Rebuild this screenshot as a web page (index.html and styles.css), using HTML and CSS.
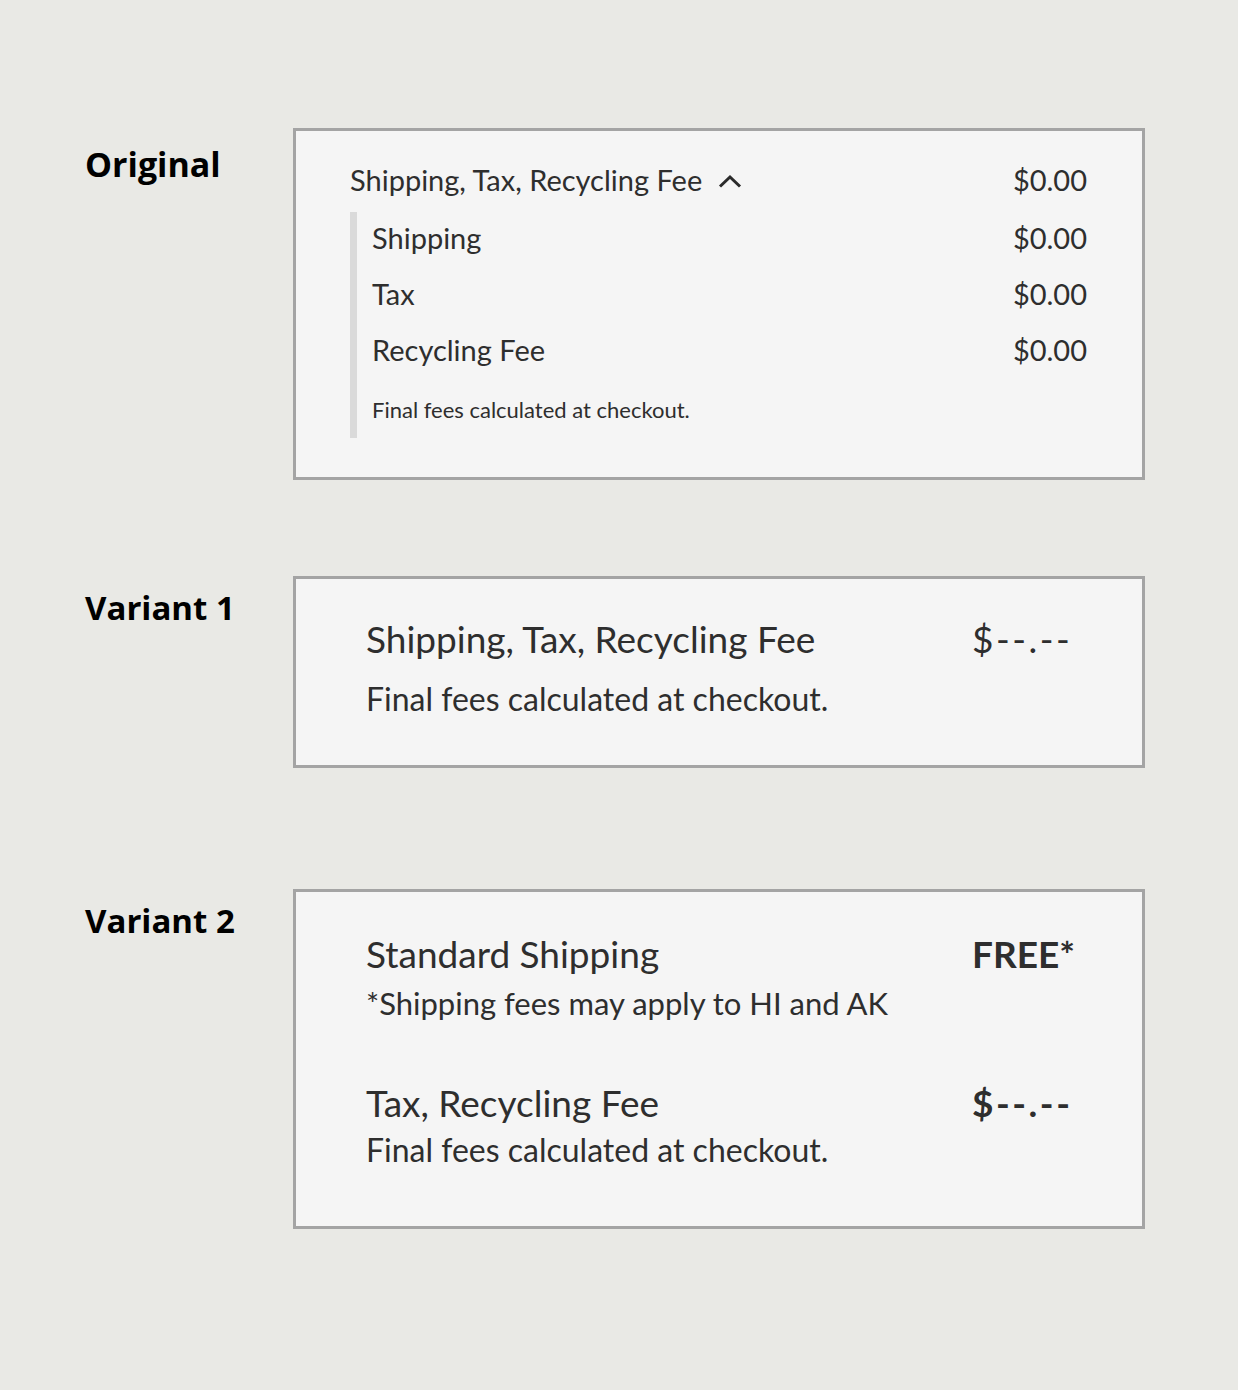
FILE: index.html
```html
<!DOCTYPE html>
<html lang="en">
<head>
  <meta charset="UTF-8" />
  <title>Fee Summary Variants</title>
  <link rel="stylesheet" href="styles.css">
</head>
<body>
  <div class="page">

    <!-- Original -->
    <div class="section section-original">
      <h2 class="label label-original">Original</h2>
      <div class="card card-original">
        <div class="row header-row">
          <span class="header-title">Shipping, Tax, Recycling Fee
            <svg class="chevron" width="24" height="14" viewBox="0 0 24 14">
              <polyline points="2,12.5 12,3 22,12.5" fill="none" stroke="#2b2b2b" stroke-width="3" />
            </svg>
          </span>
          <span class="amount">$0.00</span>
        </div>
        <div class="breakdown">
          <div class="row sub-row"><span>Shipping</span><span class="amount">$0.00</span></div>
          <div class="row sub-row"><span>Tax</span><span class="amount">$0.00</span></div>
          <div class="row sub-row"><span>Recycling Fee</span><span class="amount">$0.00</span></div>
          <p class="fine-print">Final fees calculated at checkout.</p>
        </div>
      </div>
    </div>

    <!-- Variant 1 -->
    <div class="section section-v1">
      <h2 class="label">Variant 1</h2>
      <div class="card card-v1">
        <div class="line">
          <span class="big-title">Shipping, Tax, Recycling Fee</span>
          <span class="value dashes">$--.--</span>
        </div>
        <p class="note note-spaced">Final fees calculated at checkout.</p>
      </div>
    </div>

    <!-- Variant 2 -->
    <div class="section section-v2">
      <h2 class="label">Variant 2</h2>
      <div class="card card-v2">
        <div class="group">
          <div class="line">
            <span class="big-title">Standard Shipping</span>
            <span class="value bold">FREE*</span>
          </div>
          <p class="note">*Shipping fees may apply to HI and AK</p>
        </div>
        <div class="group group-second">
          <div class="line">
            <span class="big-title">Tax, Recycling Fee</span>
            <span class="value bold dashes">$--.--</span>
          </div>
          <p class="note">Final fees calculated at checkout.</p>
        </div>
      </div>
    </div>

  </div>
</body>
</html>
```

FILE: styles.css
```css
body {
  margin: 0;
  background-color: #e9e9e5;
  font-family: 'Lato', 'Open Sans', sans-serif;
  color: #2e2e2e;
}

.page {
  padding: 128px 0 0 85px;
}

.section {
  display: grid;
  grid-template-columns: 208px 852px;
  align-items: start;
}

.section-original {
  margin-bottom: 96px;
}

.section-v1 {
  margin-bottom: 121px;
}

.label {
  margin: 12px 0 0;
  font-family: 'Open Sans', sans-serif;
  font-weight: 700;
  font-size: 33px;
  line-height: 40px;
  color: #000;
}

.label-original {
  margin-top: 16px;
  font-size: 34px;
}

.card {
  background: #f5f5f5;
  border: 3px solid #a4a4a4;
}

/* Original card */

.card-original {
  padding: 31px 55px 39px 54px;
}

.row {
  display: flex;
  justify-content: space-between;
  align-items: center;
}

.header-row {
  font-size: 29px;
  line-height: 36px;
}

.header-title {
  display: flex;
  align-items: center;
  gap: 16px;
}

.chevron {
  margin-top: 2px;
}

.breakdown {
  margin-top: 14px;
  border-left: 7px solid #dadada;
  padding: 8px 0 16px 15px;
  display: flex;
  flex-direction: column;
  gap: 20px;
}

.sub-row {
  font-size: 29px;
  line-height: 36px;
}

.fine-print {
  margin: 10px 0 0;
  font-size: 22px;
  line-height: 24px;
}

/* Variants */

.card-v1 {
  padding: 38px 0 48px 70px;
}

.card-v2 {
  padding: 40px 0 58px 70px;
}

.line {
  display: grid;
  grid-template-columns: 606px 1fr;
  align-items: center;
}

.big-title {
  font-size: 37px;
  line-height: 44px;
}

.value {
  font-size: 37px;
  line-height: 44px;
}

.value.bold {
  font-weight: 700;
}

.dashes {
  letter-spacing: 2.5px;
}

.note {
  margin: 9px 0 0;
  font-size: 31px;
  line-height: 36px;
}

.note-spaced {
  margin-top: 20px;
  font-size: 32px;
}

.group-second {
  margin-top: 60px;
}

.group-second .note {
  margin-top: 7px;
  font-size: 32px;
}
```
